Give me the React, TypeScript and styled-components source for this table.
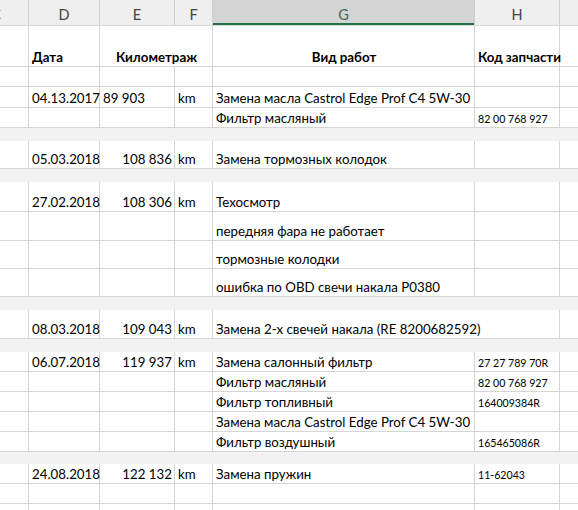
import React from "react";
import styled, { createGlobalStyle } from "styled-components";

const GlobalStyle = createGlobalStyle`
  html, body { margin: 0; padding: 0; background: #ffffff; }
  body { overflow: hidden; }
`;

const COLS = "65px 71px 75px 38px 262px 85px 100px";
const GRID = "#d6d6d6";
const FONT = `"Lato", "Liberation Sans", sans-serif`;

const Page = styled.div`
  width: 578px;
  height: 510px;
  overflow: hidden;
  background: #fff;
  font-family: ${FONT};
  color: #000;
`;

const Sheet = styled.div`
  margin-left: -36px;
  display: flex;
  flex-direction: column;
  width: 696px;
`;

const HeaderRow = styled.div`
  display: grid;
  grid-template-columns: ${COLS};
  height: 26px;
  background: #efefef;
  border-bottom: 1px solid #d8d8d8;
  box-sizing: border-box;
`;

const HeaderCell = styled.div<{ $selected?: boolean }>`
  display: flex;
  align-items: center;
  justify-content: center;
  padding-top: 4px;
  box-sizing: border-box;
  border-right: 1px solid #cfcfcf;
  background: ${(p) => (p.$selected ? "#d4d4d4" : "transparent")};
  box-shadow: ${(p) => (p.$selected ? "inset 0 -2px 0 #217346" : "none")};
  color: ${(p) => (p.$selected ? "#3d6e50" : "#444")};
  font-size: 14.5px;
`;

const Row = styled.div<{ $h: number }>`
  display: grid;
  grid-template-columns: ${COLS};
  height: ${(p) => p.$h}px;
`;

const Band = styled.div<{ $h: number }>`
  height: ${(p) => p.$h}px;
  background: #f2f2f2;
`;

const Cell = styled.div<{
  $align?: "left" | "right" | "center";
  $bold?: boolean;
  $small?: boolean;
  $span?: number;
}>`
  grid-column: span ${(p) => p.$span ?? 1};
  display: flex;
  align-items: flex-end;
  justify-content: ${(p) =>
    p.$align === "right" ? "flex-end" : p.$align === "center" ? "center" : "flex-start"};
  box-sizing: border-box;
  border-right: 1px solid ${GRID};
  border-bottom: 1px solid ${GRID};
  padding: 0 2px 1px 3px;
  min-width: 0;
  font-size: ${(p) => (p.$small ? "10.6px" : "13.3px")};
  font-weight: ${(p) => (p.$bold ? 700 : 400)};
  line-height: ${(p) => (p.$small ? "13px" : "16px")};
  white-space: nowrap;
`;

type Line = {
  h: number;
  date?: string;
  km?: string;
  kmLeft?: boolean;
  unit?: string;
  work?: string;
  workWide?: boolean;
  code?: string;
};

const lines: (Line | { band: number })[] = [
  { h: 20 },
  { h: 21, date: "04.13.2017", km: "89 903", kmLeft: true, unit: "km", work: "Замена масла Castrol Edge Prof C4 5W-30" },
  { h: 20, work: "Фильтр масляный", code: "82 00 768 927" },
  { band: 13 },
  { h: 28, date: "05.03.2018", km: "108 836", unit: "km", work: "Замена тормозных колодок" },
  { band: 13 },
  { h: 30, date: "27.02.2018", km: "108 306", unit: "km", work: "Техосмотр" },
  { h: 29, work: "передняя фара не работает" },
  { h: 28, work: "тормозные колодки" },
  { h: 28, work: "ошибка по OBD свечи накала P0380" },
  { band: 13 },
  { h: 29, date: "08.03.2018", km: "109 043", unit: "km", work: "Замена 2-х свечей накала (RE 8200682592)", workWide: true },
  { band: 13 },
  { h: 20, date: "06.07.2018", km: "119 937", unit: "km", work: "Замена салонный фильтр", code: "27 27 789 70R" },
  { h: 20, work: "Фильтр масляный", code: "82 00 768 927" },
  { h: 20, work: "Фильтр топливный", code: "164009384R" },
  { h: 20, work: "Замена масла Castrol Edge Prof C4 5W-30" },
  { h: 20, work: "Фильтр воздушный", code: "165465086R" },
  { band: 12 },
  { h: 20, date: "24.08.2018", km: "122 132", unit: "km", work: "Замена пружин", code: "11-62043" },
  { h: 20 },
  { h: 20 },
];

const DataRow: React.FC<{ line: Line }> = ({ line }) => (
  <Row $h={line.h}>
    <Cell />
    <Cell>{line.date}</Cell>
    <Cell $align={line.kmLeft ? "left" : "right"}>{line.km}</Cell>
    <Cell>{line.unit}</Cell>
    {line.workWide ? (
      <Cell $span={2}>{line.work}</Cell>
    ) : (
      <>
        <Cell>{line.work}</Cell>
        <Cell $small>{line.code}</Cell>
      </>
    )}
    <Cell />
  </Row>
);

export default function App() {
  return (
    <Page>
      <GlobalStyle />
      <Sheet>
        <HeaderRow>
          <HeaderCell>C</HeaderCell>
          <HeaderCell>D</HeaderCell>
          <HeaderCell>E</HeaderCell>
          <HeaderCell>F</HeaderCell>
          <HeaderCell $selected>G</HeaderCell>
          <HeaderCell>H</HeaderCell>
          <HeaderCell />
        </HeaderRow>
        <Row $h={41}>
          <Cell />
          <Cell $bold>Дата</Cell>
          <Cell $bold $align="center" $span={2}>Километраж</Cell>
          <Cell $bold $align="center">Вид работ</Cell>
          <Cell $bold>Код запчасти</Cell>
          <Cell />
        </Row>
        {lines.map((l, i) =>
          "band" in l ? <Band key={i} $h={l.band} /> : <DataRow key={i} line={l} />
        )}
      </Sheet>
    </Page>
  );
}
